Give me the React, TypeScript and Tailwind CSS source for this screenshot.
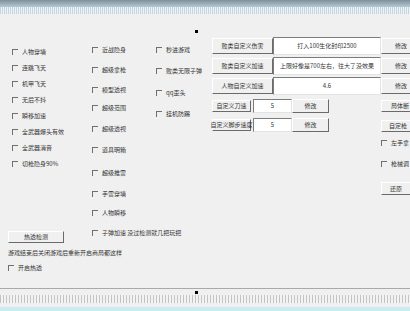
import React from "react";

const col1 = [
  "人物穿墙",
  "连跳飞天",
  "机甲飞天",
  "无后不抖",
  "瞬移加速",
  "全武器爆头有效",
  "全武器消音",
  "切枪隐身90%",
];

const col2 = [
  { label: "近战隐身", gap: "" },
  { label: "超级拿枪", gap: "mt-[10px]" },
  { label: "模型透视", gap: "mt-[10px]" },
  { label: "超级范围", gap: "mt-[8px]" },
  { label: "超级透视", gap: "mt-[11px]" },
  { label: "道具明箱", gap: "mt-[11px]" },
  { label: "超级推雷", gap: "mt-[13px]" },
  { label: "手雷穿墙", gap: "mt-[11px]" },
  { label: "人物瞬移", gap: "mt-[9px]" },
  { label: "子弹加速  没过检测就几把玩把", gap: "mt-[10px]" },
];

const col3 = [
  { label: "秒进游戏", gap: "" },
  { label: "败类无限子弹", gap: "mt-[11px]" },
  { label: "qq歪头", gap: "mt-[12px]" },
  { label: "挂机防踢", gap: "mt-[11px]" },
];

function Check({ label, className = "" }: { label: string; className?: string }) {
  return (
    <div className={"flex items-center h-[10px] gap-[4px] whitespace-nowrap " + className}>
      <span className="w-[6px] h-[6px] shrink-0 border-t border-l border-[#6f6f6f]" />
      <span>{label}</span>
    </div>
  );
}

function Btn({ children, className = "" }: { children: React.ReactNode; className?: string }) {
  return (
    <div
      className={
        "flex items-center justify-center shrink-0 whitespace-nowrap bg-[#f0f0f0] border border-t-white border-l-white border-r-[#6a6a6a] border-b-[#6a6a6a] " +
        className
      }
    >
      {children}
    </div>
  );
}

function Field({ children, className = "" }: { children: React.ReactNode; className?: string }) {
  return (
    <div
      className={
        "flex items-center justify-center shrink-0 whitespace-nowrap bg-white border border-t-[#7c7c7c] border-l-[#7c7c7c] border-r-[#e3e3e3] border-b-[#e3e3e3] " +
        className
      }
    >
      {children}
    </div>
  );
}

export default function App() {
  return (
    <div className="w-[410px] h-[311px] overflow-hidden flex flex-col bg-[#f0f0f0] text-[#333] text-[6px] leading-none font-['Noto_Sans_CJK_SC','Liberation_Sans',sans-serif]">
      {/* title strip */}
      <div className="h-[14px] flex flex-col shrink-0">
        <div className="h-[7px] bg-[linear-gradient(to_bottom,#7b919b,#b7c9d3)]" />
        <div className="h-[7px] bg-[repeating-linear-gradient(90deg,#c3d6e0_0_1px,#edf4f8_1px_2px)]" />
      </div>
      <div className="h-[21px] shrink-0 flex items-end pl-[195px] pb-[2px]">
        <div className="w-[3px] h-[3px] bg-black" />
      </div>

      {/* main */}
      <div className="h-[253px] shrink-0 flex">
        <div className="w-[92px] shrink-0 flex flex-col pl-[8px]">
          <div className="pl-[4px] pt-[9px] flex flex-col">
            {col1.map((t) => (
              <Check key={t} label={t} className="h-[16px]" />
            ))}
          </div>
          <Btn className="mt-[59px] w-[56px] h-[12px]">热透检测</Btn>
          <div className="mt-[5px] h-[10px] flex items-center whitespace-nowrap">
            游戏结束后关闭游戏后重新开启商局都这样
          </div>
          <Check label="开启热透" className="mt-[5px] gap-[3px]" />
        </div>

        <div className="w-[64px] shrink-0 flex flex-col pt-[10px]">
          {col2.map((c) => (
            <Check key={c.label} label={c.label} className={c.gap} />
          ))}
        </div>

        <div className="w-[56px] shrink-0 flex flex-col pt-[10px]">
          {col3.map((c) => (
            <Check key={c.label} label={c.label} className={c.gap} />
          ))}
        </div>

        <div className="flex-1 flex flex-col pt-[2px]">
          <div className="flex flex-col gap-[2px]">
            <div className="h-[18px] flex items-center">
              <Btn className="w-[61px] h-[16px]">败类自定义伤害</Btn>
              <Field className="w-[108px] h-[18px]">打入100生化封印2500</Field>
              <Btn className="w-[40px] h-[16px]">修改</Btn>
            </div>
            <div className="h-[18px] flex items-center">
              <Btn className="w-[61px] h-[16px]">败类自定义加速</Btn>
              <Field className="w-[108px] h-[18px]">上限好像是700左右，往大了没效果</Field>
              <Btn className="w-[40px] h-[16px]">修改</Btn>
            </div>
            <div className="h-[18px] flex items-center">
              <Btn className="w-[61px] h-[16px]">人物自定义加速</Btn>
              <Field className="w-[108px] h-[18px]">4.6</Field>
              <Btn className="w-[40px] h-[16px]">修改</Btn>
            </div>
          </div>

          <div className="flex">
            <div className="w-[169px] shrink-0 flex flex-col pt-[4px]">
              <div className="h-[14px] flex items-center">
                <Btn className="w-[39px] h-[12px]">自定义刀速</Btn>
                <Field className="ml-[2px] w-[39px] h-[14px]">5</Field>
                <Btn className="w-[37px] h-[14px] border-t-transparent border-l-transparent">修改</Btn>
              </div>
              <div className="mt-[5px] h-[14px] flex items-center">
                <Btn className="w-[39px] h-[12px]">自定义脚步速度</Btn>
                <Field className="ml-[2px] w-[39px] h-[14px]">5</Field>
                <Btn className="w-[37px] h-[14px] border-t-transparent border-l-transparent">修改</Btn>
              </div>
            </div>

            <div className="flex flex-col pt-[5px]">
              <Btn className="w-[38px] h-[12px]">局体断</Btn>
              <Btn className="mt-[8px] w-[34px] h-[12px]">自定枪</Btn>
              <Check label="左手拿" className="mt-[6px] gap-[2px]" />
              <Check label="枪械调" className="mt-[11px] gap-[2px]" />
              <Btn className="mt-[13px] w-[30px] h-[13px]">还原</Btn>
            </div>
          </div>
        </div>
      </div>

      {/* bottom strip */}
      <div className="h-[23px] shrink-0 flex flex-col border-t border-[#a9a9a9]">
        <div className="h-[6px] flex items-center pl-[195px]">
          <div className="w-[3px] h-[3px] bg-black" />
        </div>
        <div className="h-[8px] bg-[repeating-linear-gradient(90deg,#c4c4c4_0_1px,#f3f3f3_1px_3px)]" />
        <div className="h-[4px] bg-[#f5edf0]" />
        <div className="flex-1 bg-[#c6eef1]" />
      </div>
    </div>
  );
}
